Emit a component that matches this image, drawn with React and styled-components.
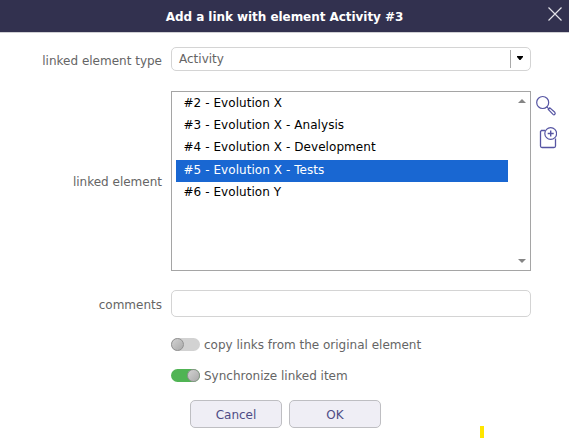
import React from "react";
import styled, { createGlobalStyle } from "styled-components";

const GlobalStyle = createGlobalStyle`
  * { box-sizing: border-box; }
  body { margin: 0; background: #fff; }
`;

const Dialog = styled.div`
  position: relative;
  width: 569px;
  height: 439px;
  overflow: hidden;
  background: #fff;
  color: #656565;
  font: 12px/16px "DejaVu Sans", Verdana, sans-serif;
  white-space: nowrap;
`;

const Header = styled.header`
  display: grid;
  grid-template-columns: 28px 1fr 28px;
  align-items: center;
  height: 33px;
  border-bottom: 1px solid #d0d0d4;
  background: #32314f;
`;

const Title = styled.h1`
  grid-column: 2;
  margin: 1px 0 0;
  color: #fff;
  font-size: 12px;
  line-height: 16px;
  letter-spacing: -0.05px;
  text-align: center;
`;

const CloseButton = styled.button`
  display: flex;
  width: 16px;
  height: 16px;
  margin: -4px 0 0 6px;
  padding: 0;
  border: 0;
  background: none;
`;

const Form = styled.div`
  display: flex;
  flex-direction: column;
  padding-top: 14px;
`;

const Row = styled.div`
  display: grid;
  grid-template-columns: 162px 360px 24px;
  column-gap: 9px;
  height: ${(p) => p.$height}px;
  margin-bottom: ${(p) => p.$gap}px;
`;

const Label = styled.label`
  align-self: center;
  padding-top: ${(p) => p.$drop || 0}px;
  text-align: right;
`;

const Select = styled.div`
  display: flex;
  align-items: center;
  justify-content: space-between;
  padding: 0 0 1px 7px;
  border: 1px solid #d4d4d4;
  border-radius: 5px;
`;

const SelectArrow = styled.span`
  display: flex;
  align-items: center;
  justify-content: center;
  width: 20px;
  height: 18px;
  padding: 0 2px 1px 0;
  border-left: 1px solid #a9a9a9;
`;

const ListBox = styled.div`
  display: flex;
  justify-content: space-between;
  border: 1px solid #a5a5a5;
`;

const Options = styled.ul`
  width: 336px;
  margin: 0;
  padding: 1px 0 0 4px;
  list-style: none;
`;

const Option = styled.li`
  height: 22.2px;
  padding-left: 7.5px;
  background: ${(p) => (p.$selected ? "#1967d2" : "transparent")};
  color: ${(p) => (p.$selected ? "#fff" : "#000")};
  letter-spacing: 0.06px;
  line-height: 20px;
`;

const Scroller = styled.div`
  display: flex;
  flex-direction: column;
  justify-content: space-between;
  width: 14px;
  padding: 7px 4px 7px 2px;
`;

const Tools = styled.div`
  display: flex;
  flex-direction: column;
  align-items: flex-start;
  gap: 10px;
  padding-top: 4px;
  margin-left: -5px;
`;

const TextInput = styled.input`
  width: 360px;
  border: 1px solid #d4d4d4;
  border-radius: 5px;
  background: #fff;
`;

const SwitchRow = styled.div`
  display: flex;
  align-items: center;
  gap: 4px;
  height: 13px;
  margin: 0 0 ${(p) => p.$gap}px 171px;
`;

const Track = styled.span`
  display: flex;
  justify-content: ${(p) => (p.$on ? "flex-end" : "flex-start")};
  width: 29px;
  height: 13px;
  border-radius: 7px;
  background: ${(p) => (p.$on ? "#50b454" : "#d2d2d2")};
`;

const Knob = styled.span`
  width: 13px;
  height: 13px;
  border: 1px solid #929292;
  border-radius: 50%;
  background: linear-gradient(135deg, #d2d2d2, #aaa);
`;

const Actions = styled.div`
  display: flex;
  gap: 7px;
  margin-left: 190px;
`;

const Button = styled.button`
  width: 92px;
  height: 28px;
  padding: 2px 0 0;
  border: 1px solid #bebec2;
  border-radius: 5px;
  background: #efeef5;
  color: #4e4c85;
  font: inherit;
`;

const Marker = styled.span`
  position: absolute;
  left: 480px;
  top: 426px;
  width: 4px;
  height: 12px;
  background: #ffe600;
`;

const elements = [
  "#2 - Evolution X",
  "#3 - Evolution X - Analysis",
  "#4 - Evolution X - Development",
  "#5 - Evolution X - Tests",
  "#6 - Evolution Y",
];

const SearchIcon = () => (
  <svg width="22" height="22" viewBox="0 0 22 22" fill="none" stroke="#5655a3">
    <circle cx="7.700" cy="7.500" r="6" strokeWidth="1.200" />
    <path d="M11.800 11.800l2 2M13.300 14.500l1.500-1.700 5 4.500c1.200 1.300-.500 3.200-1.800 2.100z" strokeWidth="1.200" />
  </svg>
);

const AddIcon = () => (
  <svg width="22" height="22" viewBox="0 0 22 22" fill="none" stroke="#5655a3">
    <path d="M10 3.500H6.500L5.500 4.500v14.500q0 1.500 1.500 1.500h12q1.500 0 1.500-1.500V11.500" strokeWidth="1.300" />
    <circle cx="15.700" cy="6.500" r="5.900" fill="#fff" strokeWidth="1.200" />
    <path d="M15.700 3.500v6M12.700 6.500h6" strokeWidth="1.400" />
  </svg>
);

export default function App() {
  return (
    <Dialog>
      <GlobalStyle />
      <Header>
        <Title>Add a link with element Activity #3</Title>
        <CloseButton aria-label="Close">
          <svg width="16" height="16" viewBox="0 0 16 16" stroke="#e2e2e8" strokeWidth="1.2">
            <path d="M1.500 1.500l13 13M14.500 1.500l-13 13" />
          </svg>
        </CloseButton>
      </Header>
      <Form>
        <Row $height={24} $gap={20}>
          <Label $drop={3}>linked element type</Label>
          <Select>
            Activity
            <SelectArrow>
              <svg width="6" height="4" viewBox="0 0 6 4"><path d="M0 0h6v1L3.500 4h-1L0 1z" /></svg>
            </SelectArrow>
          </Select>
        </Row>
        <Row $height={180} $gap={19}>
          <Label $drop={2}>linked element</Label>
          <ListBox>
            <Options>
              {elements.map((name, i) => (
                <Option key={name} $selected={i === 3}>{name}</Option>
              ))}
            </Options>
            <Scroller>
              <svg width="8" height="4" viewBox="0 0 8 4" fill="#858585"><path d="M4 0l4 4H0z" /></svg>
              <svg width="8" height="4" viewBox="0 0 8 4" fill="#858585"><path d="M0 0h8L4 4z" /></svg>
            </Scroller>
          </ListBox>
          <Tools>
            <SearchIcon />
            <AddIcon />
          </Tools>
        </Row>
        <Row $height={27} $gap={21}>
          <Label $drop={2}>comments</Label>
          <TextInput />
        </Row>
        <SwitchRow $gap={18}>
          <Track><Knob /></Track>
          copy links from the original element
        </SwitchRow>
        <SwitchRow $gap={18}>
          <Track $on><Knob /></Track>
          Synchronize linked item
        </SwitchRow>
        <Actions>
          <Button>Cancel</Button>
          <Button>OK</Button>
        </Actions>
      </Form>
      <Marker />
    </Dialog>
  );
}
